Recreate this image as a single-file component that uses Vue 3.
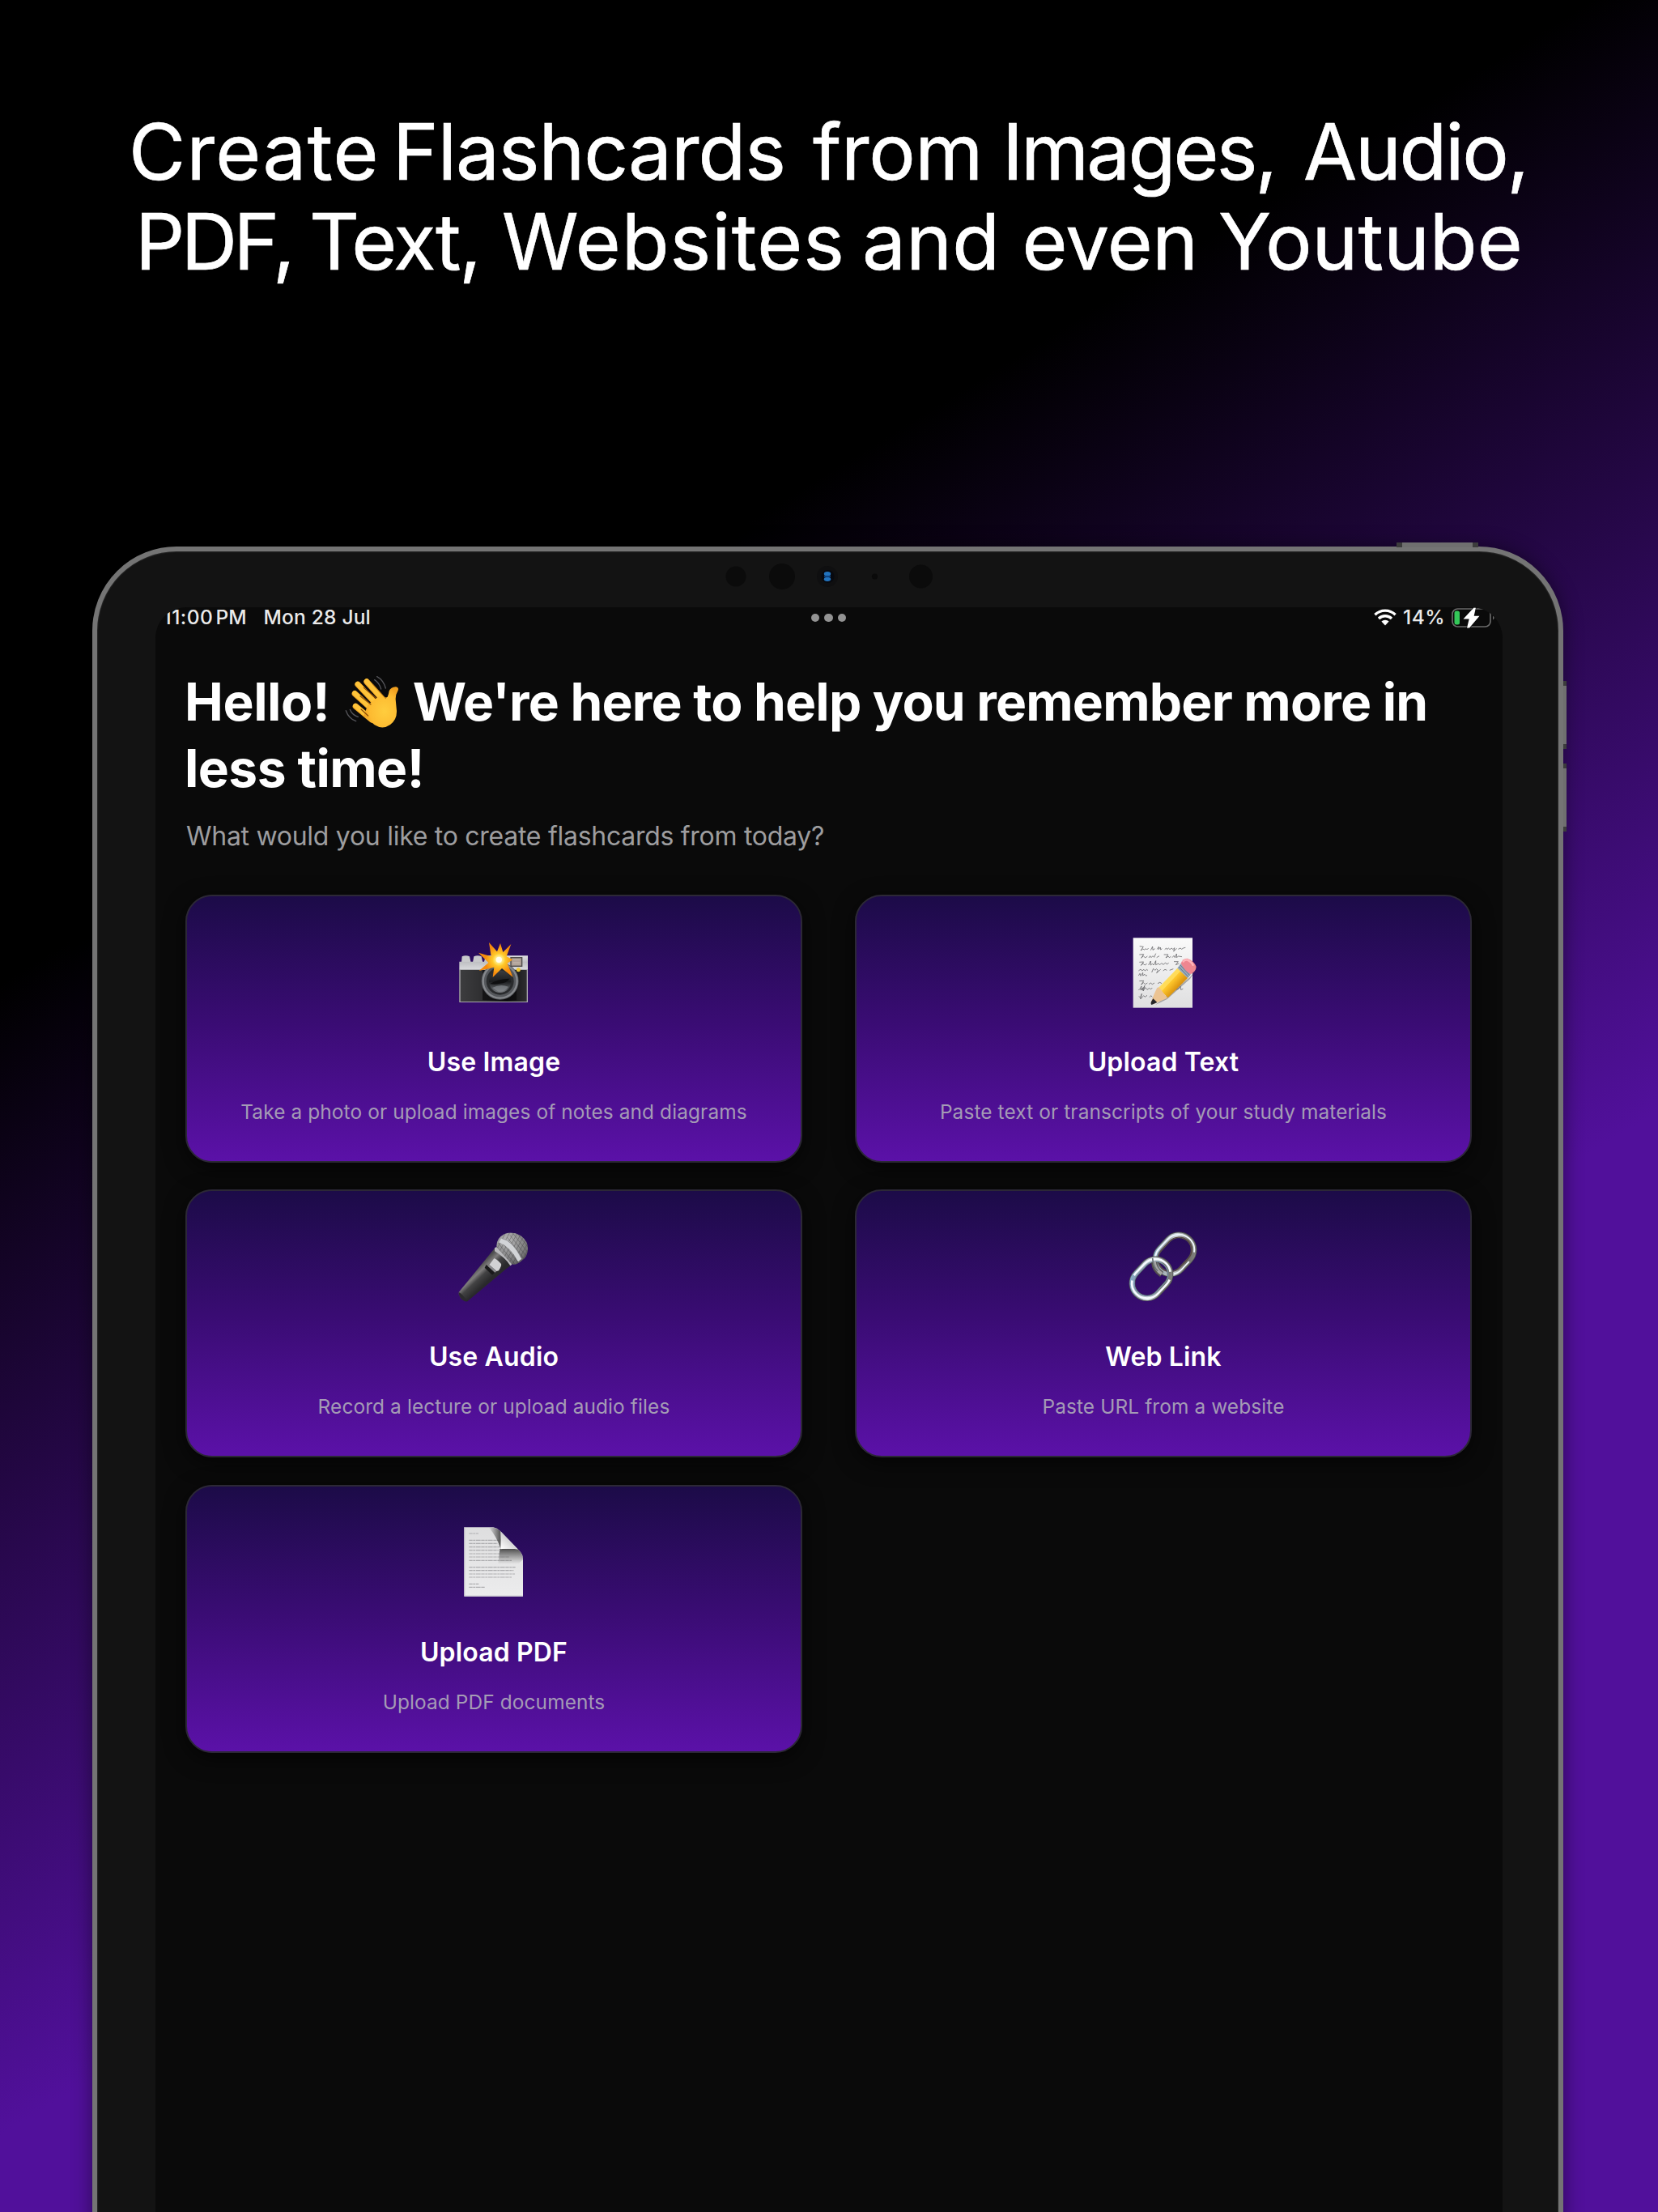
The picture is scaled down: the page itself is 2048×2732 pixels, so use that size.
<script setup>
const headline = [
  [
    { t: 'Create', w: 326, s: 1.3 },
    { t: 'Flashcards', w: 519, s: -1 },
    { t: 'from', w: 234, s: -0.45 },
    { t: 'Images,', w: 372, s: -2.8 },
    { t: 'Audio,', w: 284, s: -2.2 },
  ],
  [
    { t: 'PDF,', w: 215, s: -4.5 },
    { t: 'Text,', w: 238, s: -2.2 },
    { t: 'Websites', w: 445, s: 1.05 },
    { t: 'and', w: 197.5, s: 0.3 },
    { t: 'even', w: 242.5, s: -0.45 },
    { t: 'Youtube', w: 376, s: 0.1 },
  ],
]
const cards = [
  { icon: 'camera', title: 'Use Image', desc: 'Take a photo or upload images of notes and diagrams' },
  { icon: 'memo', title: 'Upload Text', desc: 'Paste text or transcripts of your study materials' },
  { icon: 'mic', title: 'Use Audio', desc: 'Record a lecture or upload audio files' },
  { icon: 'link', title: 'Web Link', desc: 'Paste URL from a website' },
  { icon: 'page', title: 'Upload PDF', desc: 'Upload PDF documents' },
]
const pageLines = [
  [118, 75, 35], [118, 100, 110], [118, 112, 106], [118, 125, 112], [118, 137, 110], [118, 150, 116], [118, 162, 150], [118, 175, 160],
  [118, 200, 172], [118, 212, 165], [118, 225, 170], [118, 237, 160], [118, 262, 36], [118, 274, 58],
]
const grille = [0, 1, 2, 3, 4, 5, 6, 7, 8, 9, 10]
</script>

<template>
  <main class="poster">
    <h1 class="headline">
      <span v-for="(line, i) in headline" :key="i" class="line" :class="'l' + (i + 1)">
        <span v-for="w in line" :key="w.t" class="word" :style="{ width: w.w + 'px', letterSpacing: w.s + 'px' }">{{ w.t }}</span>
      </span>
    </h1>

    <div class="tablet">
      <i class="key power"></i>
      <i class="key vol up"></i>
      <i class="key vol down"></i>
      <svg class="sensors" viewBox="0 0 280 40">
        <circle cx="19" cy="20" r="12.500" fill="#0b0b0b" />
        <circle cx="76" cy="20" r="16" fill="#0b0b0b" />
        <circle cx="132" cy="20" r="13" fill="#0f0f10" />
        <circle cx="132.500" cy="20" r="8" fill="#07090f" />
        <ellipse cx="132" cy="16.800" rx="4.200" ry="2.800" fill="#2273bd" />
        <ellipse cx="132" cy="23.300" rx="4.200" ry="2.600" fill="#2273bd" />
        <rect x="128" y="18.800" width="8" height="2.400" fill="#0f4a90" opacity=".8" />
        <circle cx="190.500" cy="20" r="3.600" fill="#0a0a0a" />
        <circle cx="247.500" cy="20" r="14.500" fill="#0b0b0b" />
      </svg>

      <div class="screen">
        <div class="status">
          <div class="when">
            <span class="clock">11:00</span><span class="pm">PM</span><span class="date">Mon 28 Jul</span>
          </div>
          <div class="dots"><i></i><i></i><i></i></div>
          <div class="power-info">
            <svg class="wifi" viewBox="0 0 28 21">
              <g fill="none" stroke="#fff" stroke-width="3.400">
                <path d="M1.400 7.300a18 18 0 0 1 25.200 0" />
                <path d="M6 12a11.500 11.500 0 0 1 16 0" />
              </g>
              <path d="M9.400 15.600a6.600 6.600 0 0 1 9.200 0L14 20.500z" fill="#fff" />
            </svg>
            <span class="pct">14%</span>
            <svg class="battery" viewBox="0 0 54 26">
              <rect x="1" y="2" width="47" height="22" rx="6.500" fill="none" stroke="#6a6a6a" stroke-width="1.700" />
              <rect x="3.500" y="4.500" width="6.500" height="17" rx="2.500" fill="#34c759" />
              <path d="M27.500 0.500L14.500 14.500h7.200L19 25.500h3L34.500 10.800h-6.800L30 0.500z" fill="#fff" stroke="#090909" stroke-width="1.200" paint-order="stroke" />
              <path d="M51 10.500q3.500 2.500 0 5z" fill="#6a6a6a" />
            </svg>
          </div>
        </div>

        <h2 class="hello">
          <span class="hi">Hello!</span>
          <svg class="wave" viewBox="80 40 200 200">
            <defs>
              <radialGradient id="skin" cx=".6" cy=".6" r=".6">
                <stop offset="0" stop-color="#ffcd3e" />
                <stop offset=".7" stop-color="#fdbb31" />
                <stop offset="1" stop-color="#f0a020" />
              </radialGradient>
            </defs>
            <g fill="none" stroke="#f0a424" stroke-width="22" stroke-linecap="round">
              <path d="M120 155L180 205M117 108L185 170M128 74L200 150M161 64L225 135" />
            </g>
            <g fill="none" stroke="#fec43a" stroke-width="17" stroke-linecap="round">
              <path d="M119 153L180 205M116 106L185 170M127 72L200 150M160 62L225 135" />
            </g>
            <path d="M165 150L215 110Q230 128 238 120Q243 108 244 98Q250 84 268 83Q281 85 277 96Q267 112 268 130L272 172Q273 205 248 223Q220 243 190 224L150 190Z" fill="url(#skin)" />
            <path d="M140 166L166 190M137 117L176 148M150 86L194 124" stroke="#8b4b08" stroke-width="3.500" stroke-linecap="round" fill="none" />
            <path d="M183 73L232 127" stroke="#b87412" stroke-width="3" fill="none" />
            <g fill="none" stroke="#55555a" stroke-width="4" stroke-linecap="round">
              <path d="M199 45Q223 58 231 88M190 57Q207 68 214 91M84 171Q94 200 121 210M99 167Q107 188 129 194" />
            </g>
          </svg>
          <span class="rest">We're here to help you remember more in</span>
          <span class="second">less time!</span>
        </h2>
        <p class="sub">What would you like to create flashcards from today?</p>

        <div class="grid">
          <article v-for="c in cards" :key="c.title" class="card">
            <svg v-if="c.icon === 'camera'" class="emoji" viewBox="0 0 420 360">
              <defs>
                <linearGradient id="silver" x2="0" y2="1"><stop offset="0" stop-color="#e0e0e2" /><stop offset=".45" stop-color="#bfc0c3" /><stop offset="1" stop-color="#dcdde0" /></linearGradient>
                <linearGradient id="leather"><stop offset="0" stop-color="#3d3d3f" /><stop offset=".35" stop-color="#2e2e30" /><stop offset=".7" stop-color="#0d0d0e" /><stop offset="1" stop-color="#303032" /></linearGradient>
                <linearGradient id="glass" x2="0" y2="1"><stop offset="0" stop-color="#3b3d40" /><stop offset=".5" stop-color="#1b1d1f" /><stop offset="1" stop-color="#75797d" /></linearGradient>
                <radialGradient id="flash" cx="229" cy="136" r="66" gradientUnits="userSpaceOnUse"><stop offset="0" stop-color="#fff" /><stop offset=".14" stop-color="#fff6a0" /><stop offset=".36" stop-color="#ffc92a" /><stop offset=".8" stop-color="#f68a0c" /></radialGradient>
              </defs>
              <path d="M92 124q14-7 28 0l5 22H90zM136 124q14-7 28 0l5 22h-37z" fill="#c9cacc" />
              <path d="M82 143h92l6-22h156v54H82z" fill="url(#silver)" />
              <path d="M82 173h254v120H82z" fill="url(#leather)" />
              <path d="M82 173h4v118h246V173h4v121H82z" fill="#aaa9ae" />
              <path d="M168 174h126v112H168z" fill="#0a0a0b" opacity=".7" />
              <circle cx="233" cy="215" r="69" fill="#55585c" />
              <circle cx="233" cy="215" r="63" fill="none" stroke="#85888c" stroke-width="7" />
              <circle cx="233" cy="215" r="51" fill="#292b2d" />
              <circle cx="233" cy="217" r="41" fill="url(#glass)" />
              <path d="M196 225q28-18 72-19q-10 17-35 18q-20 6-37 1z" fill="#0e0f10" />
              <path d="M204 240q30-16 60-4q-15 22-37 18z" fill="#8b8f93" opacity=".65" />
              <rect x="273" y="128" width="41" height="32" fill="#a99b92" stroke="#4d4a4a" stroke-width="4" />
              <path d="M280 137h27M280 145h27M280 152h27" stroke="#d4c7bd" stroke-width="2" />
              <circle cx="301" cy="173" r="7.500" fill="#f2c830" />
              <path d="M192 72L222 106L234 75L244 108L274 78L257 124L280 136L260 149L281 201L240 168L206 201L211 164L155 177L190 147L153 110L200 124Z" fill="url(#flash)" />
              <circle cx="229" cy="136" r="11" fill="#fffef0" />
            </svg>

            <svg v-else-if="c.icon === 'memo'" class="emoji memo" viewBox="0 0 420 360">
              <defs>
                <linearGradient id="sheet" x2="0" y2="1"><stop offset="0" stop-color="#fafafa" /><stop offset="1" stop-color="#dfdfe0" /></linearGradient>
                <linearGradient id="pencil" x1="195" y1="210" x2="245" y2="255" gradientUnits="userSpaceOnUse"><stop offset="0" stop-color="#ffd94a" /><stop offset=".5" stop-color="#fcc42a" /><stop offset="1" stop-color="#d78e0c" /></linearGradient>
              </defs>
              <rect x="89" y="55" width="220" height="259" fill="url(#sheet)" />
              <g fill="none" stroke="#5c5c5e" stroke-width="2.200" stroke-linejoin="round">
                <path d="M113 86l14 2l-10 14l8-6l6 3l5-4l4 4l6-6M154 101l7-14l1 13l8-5M178 97l6-9l-1 10l7-8l1 9l5-4M206 98l6-5l3 5l5-5l5 5l7-5l4 5l7-6l-4 13l12-11M256 97l8-4l5 4l6-4l8-2" />
                <path d="M112 117l16-1l-9 14l8-8l7 7l8-6M147 129l5-7l4 6l6-6l5 5l6-14M176 128l10-6M203 117l16 0l-9 12l9-6l4 5l6-4M234 128l6-7l4 7l6-14l0 14l7-5l13 2" />
                <path d="M112 145l16-1l-10 13l8-7l6 6l8-5M146 156l8-15l0 15l6-5l5 5l8-16l0 15l10-5l5 5l6-6l7 5l8-7l5 6l7-5M240 143l16 0l-9 12l12-5" />
                <path d="M109 177l8-6l5 6l7-5l4 5l7-5l4 4M158 183l6-14l6 6l6-5l5 5l-5 10l15-13M200 177l7-5l7 3M224 175l14-5" />
                <path d="M109 195l5-8l3 9l8-12l0 11l7-5l5 6l4-3" />
                <path d="M112 215l16-1l-9 15l8-8l7 6l8-5M147 227l7-5l6 5l8-5M180 224l8-4l7 4" />
                <path d="M109 249l6-6l5-9l-3 15l9-10l-3 10l9-17l-6 20l8-13l7 8l8-6l5 5l6-6M110 272l6 4l5-14l-5 20l12-13l5 5l8-6M150 275l5-6l5 5M248 247l10-4l6-8l2 12l8-3" />
              </g>
              <path d="M172 303L215 282L300 207L324 170L300 200Z" fill="#555" opacity=".45" />
              <path d="M253 168L292 203L218 277L183 243Z" fill="url(#pencil)" />
              <path d="M253 168L265 178L192 256L180 242Z" fill="#ffe063" opacity=".8" />
              <path d="M185 238L216 278L163 301L155 295Q166 262 178 240Z" fill="#ecc493" />
              <path d="M163 280L178 294L158 303Q153 301 156 292Z" fill="#26262a" />
              <path d="M266 149L303 190L291 204L253 167Z" fill="#9aabba" />
              <path d="M264 156L299 194M258 162L294 200" stroke="#62788e" stroke-width="3" />
              <path d="M266 149Q273 131 289 131Q315 140 323 162Q322 179 303 190Q280 178 266 149Z" fill="#ee8690" />
              <path d="M273 145Q281 134 290 137Q306 144 312 158" stroke="#ffb3b8" stroke-width="7" fill="none" />
            </svg>

            <svg v-else-if="c.icon === 'mic'" class="emoji" viewBox="0 0 420 360">
              <defs>
                <linearGradient id="barrel" x1="140" y1="190" x2="185" y2="238" gradientUnits="userSpaceOnUse"><stop offset="0" stop-color="#4a4a4b" /><stop offset=".3" stop-color="#7e7c7c" /><stop offset=".55" stop-color="#424243" /><stop offset="1" stop-color="#29292b" /></linearGradient>
                <radialGradient id="mesh" cx=".4" cy=".3" r=".75"><stop offset="0" stop-color="#b8b8b9" /><stop offset=".6" stop-color="#808081" /><stop offset="1" stop-color="#4b4b4d" /></radialGradient>
                <clipPath id="ball"><path d="M220 108Q218 75 252 59Q282 49 312 68Q338 88 336 117Q334 145 317 156Q294 178 276 172Z" /></clipPath>
              </defs>
              <path d="M80 276L214 112Q228 112 276 172Q273 178 256 189L112 310Q99 311 86 296Q78 286 80 276Z" fill="url(#barrel)" />
              <path d="M80 276Q94 283 112 310Q99 311 86 296Q78 286 80 276Z" fill="#2b2b2d" />
              <path d="M213 112Q222 103 235 117L276 163Q282 172 271 178Q254 149 213 124Z" fill="#b9b9bc" />
              <g clip-path="url(#ball)">
                <rect x="200" y="40" width="150" height="150" fill="url(#mesh)" />
                <g stroke="#3a3a3b" stroke-width="1.800" opacity=".65">
                  <path v-for="n in grille" :key="n" :d="`M${215 + n * 11} ${100 - n * 7}l70 90`" />
                  <path v-for="n in grille" :key="'b' + n" :d="`M${205 + n * 12} ${145 + n * 5}l60-110`" />
                </g>
                <path d="M238 76Q280 84 313 152L300 163Q272 108 229 91Z" fill="#d2d4d7" />
                <path d="M238 76Q280 84 313 152" stroke="#77787b" stroke-width="2" fill="none" />
              </g>
              <path d="M182 174L213 204L204 212L176 185Z" fill="#19191a" />
              <path d="M211 151Q217 149 237 171Q240 177 228 196L220 198L193 174Z" fill="#d2d2d4" />
              <path d="M193 174L220 198L214 203L188 179Z" fill="#8b8b8e" />
            </svg>

            <svg v-else-if="c.icon === 'link'" class="emoji memo" viewBox="0 0 420 360">
              <defs>
                <linearGradient id="chrome" x1="0" y1="0" x2="1" y2="1"><stop offset="0" stop-color="#7fb0d8" /><stop offset=".25" stop-color="#8f9ca6" /><stop offset=".5" stop-color="#cfd6da" /><stop offset=".75" stop-color="#6b6b66" /><stop offset="1" stop-color="#8a8b88" /></linearGradient>
              </defs>
              <g fill="none">
                <g transform="rotate(-47 243 136)">
                  <rect x="165" y="81" width="156" height="110" rx="55" stroke="#4d4f50" stroke-width="23" />
                  <rect x="165" y="81" width="156" height="110" rx="55" stroke="url(#chrome)" stroke-width="18" />
                  <rect x="163" y="79" width="160" height="114" rx="57" stroke="#eef6fb" stroke-width="6" stroke-dasharray="190 40 90 60" />
                  <rect x="173" y="89" width="140" height="94" rx="47" stroke="#574441" stroke-width="4" />
                </g>
                <g transform="rotate(-47 156 226)">
                  <rect x="78" y="171" width="156" height="110" rx="55" stroke="#4e5051" stroke-width="23" />
                  <rect x="78" y="171" width="156" height="110" rx="55" stroke="url(#chrome)" stroke-width="18" />
                  <rect x="77" y="170" width="158" height="112" rx="56" stroke="#f5fbff" stroke-width="8" stroke-dasharray="170 30 210 20" />
                  <rect x="86" y="179" width="140" height="94" rx="47" stroke="#7390ab" stroke-width="3" />
                </g>
                <path d="M167 165Q169 193 195 210" stroke="#54504e" stroke-width="22" />
                <path d="M167 162Q170 190 195 208" stroke="#a5a6a5" stroke-width="12" />
                <path d="M161 150Q163 181 180 198" stroke="#6c7377" stroke-width="5" />
              </g>
            </svg>

            <svg v-else class="emoji" viewBox="0 0 420 360">
              <defs>
                <linearGradient id="paper" x2="0" y2="1"><stop offset="0" stop-color="#dededf" /><stop offset="1" stop-color="#ececed" /></linearGradient>
                <linearGradient id="fold" x1="237" y1="132" x2="268" y2="96" gradientUnits="userSpaceOnUse"><stop offset="0" stop-color="#ffffff" /><stop offset="1" stop-color="#cfcfd0" /></linearGradient>
                <linearGradient id="shadeL" x1="190" y1="0" x2="236" y2="0" gradientUnits="userSpaceOnUse"><stop offset="0" stop-color="#444" stop-opacity="0" /><stop offset="1" stop-color="#333" stop-opacity=".85" /></linearGradient>
                <linearGradient id="shadeD" x1="0" y1="132" x2="0" y2="188" gradientUnits="userSpaceOnUse"><stop offset="0" stop-color="#333" stop-opacity=".85" /><stop offset="1" stop-color="#555" stop-opacity="0" /></linearGradient>
              </defs>
              <path d="M100 52H208Q222 54 234 66L304 138Q318 152 318 168V308H100Z" fill="url(#paper)" />
              <g stroke="#adadaf" stroke-width="3.400" stroke-dasharray="13 2 8 2 18 2">
                <path v-for="(l, n) in pageLines" :key="n" :d="`M${l[0]} ${l[1]}h${l[2]}`" />
              </g>
              <path d="M192 53H208Q222 54 236 68V134Q222 88 192 53Z" fill="url(#shadeL)" />
              <path d="M232 132H298L304 138Q318 152 318 172L300 188H226Z" fill="url(#shadeD)" />
              <path d="M235 67L300 134Q268 128 235 133Q238 100 235 67Z" fill="url(#fold)" />
              <path d="M101.500 52V306.500H317" fill="none" stroke="#c4c0cb" stroke-width="3" />
            </svg>

            <h3>{{ c.title }}</h3>
            <p>{{ c.desc }}</p>
          </article>
        </div>
      </div>
    </div>
  </main>
</template>

<style>
body {
  margin: 0;
  background: #000;
}
</style>

<style scoped>
.poster {
  width: 2048px;
  height: 2732px;
  box-sizing: border-box;
  padding-top: 132px;
  overflow: hidden;
  font-family: "Inter", "Liberation Sans", sans-serif;
  color: #fff;
  background: linear-gradient(148.300deg, #000 30.400%, #51109b 66%);
}
.headline {
  margin: 0;
  height: 543px;
  font-size: 96px;
  line-height: 111px;
  font-weight: 400;
  white-space: nowrap;
  -webkit-text-stroke: 0.700px #fff;
}
.line {
  display: flex;
}
.word {
  flex: none;
}
.l1 {
  margin-left: 159px;
}
.l2 {
  margin-left: 167px;
}
.tablet {
  position: relative;
  box-sizing: border-box;
  width: 1817px;
  height: 2200px;
  margin-left: 114px;
  padding: 69px 69px 0 72px;
  border: 6px solid #747474;
  border-radius: 104px;
  background: #131313;
  box-shadow: 0 0 24px rgba(0, 0, 0, 0.450), inset 0 0 2px #555;
}
.key {
  position: absolute;
  box-sizing: border-box;
  background: #6f6f6f;
  border: 0 solid #3c3c3c;
}
.power {
  left: 1605px;
  top: -11px;
  width: 101px;
  height: 6px;
  border-width: 0 7px;
}
.vol {
  right: -10px;
  width: 4px;
  height: 84px;
  border-width: 6px 0;
}
.up {
  top: 160px;
}
.down {
  top: 262px;
}
.sensors {
  position: absolute;
  left: 770px;
  top: 10.500px;
  width: 280px;
  height: 40px;
}
.screen {
  box-sizing: border-box;
  height: 2100px;
  padding: 0 38px 0 37px;
  overflow: hidden;
  border-radius: 38px;
  background: #0a0a0a;
}
.status {
  position: relative;
  display: flex;
  justify-content: space-between;
  height: 24px;
  margin: 0 -25px 0 -27.500px;
  font-size: 24.500px;
  line-height: 24px;
  font-weight: 500;
  color: #eaeaea;
}
.when,
.power-info {
  display: flex;
}
.clock {
  width: 65px;
  letter-spacing: 0.500px;
}
.pm {
  width: 59px;
}
.date {
  letter-spacing: 0.200px;
}
.dots {
  position: absolute;
  left: 800px;
  top: 7.500px;
  display: flex;
  gap: 6.300px;
}
.dots i {
  width: 10.400px;
  height: 10.400px;
  border-radius: 50%;
  background: #939393;
}
.wifi {
  width: 28px;
  height: 21px;
  margin: 2px 8px 0 0;
}
.pct {
  width: 60px;
  letter-spacing: 0.500px;
}
.battery {
  width: 54px;
  height: 26px;
  margin: 0 -4px 0 0;
}
.hello {
  margin: 52px 0 0 -1px;
  font-size: 64px;
  line-height: 82px;
  font-weight: 700;
  height: 164px;
  white-space: nowrap;
}
.hi {
  display: inline-block;
  width: 198px;
  letter-spacing: -0.400px;
}
.wave {
  display: inline-block;
  width: 66.700px;
  height: 66.700px;
  margin-right: 17px;
  vertical-align: -11px;
}
.rest {
  letter-spacing: -0.800px;
}
.second {
  display: block;
  letter-spacing: -0.550px;
}
.sub {
  margin: 23px 0 52px 1px;
  font-size: 32px;
  line-height: 40px;
  letter-spacing: -0.280px;
  color: #9d9d9f;
}
.grid {
  display: grid;
  grid-template-columns: 762px 762px;
  gap: 33.300px 65px;
}
.card {
  display: flex;
  flex-direction: column;
  align-items: center;
  box-sizing: border-box;
  height: 331px;
  padding-top: 33px;
  border: 2px solid #2c2836;
  border-radius: 33px;
  background: linear-gradient(180deg, #1c0b48 0%, #3a0c74 48%, #5b11a8 100%);
  box-shadow: 0 7px 26px rgba(0, 0, 0, 0.600);
}
.emoji {
  width: 140px;
  height: 120px;
  flex: none;
}
.memo {
  margin-left: 6px;
}
.card h3 {
  margin: 32px 0 0;
  font-size: 32px;
  line-height: 40px;
  font-weight: 600;
  letter-spacing: 0.150px;
}
.card p {
  margin: 26px 0 0;
  font-size: 24.400px;
  line-height: 30px;
  letter-spacing: 0.120px;
  color: #a49bb5;
}
</style>
